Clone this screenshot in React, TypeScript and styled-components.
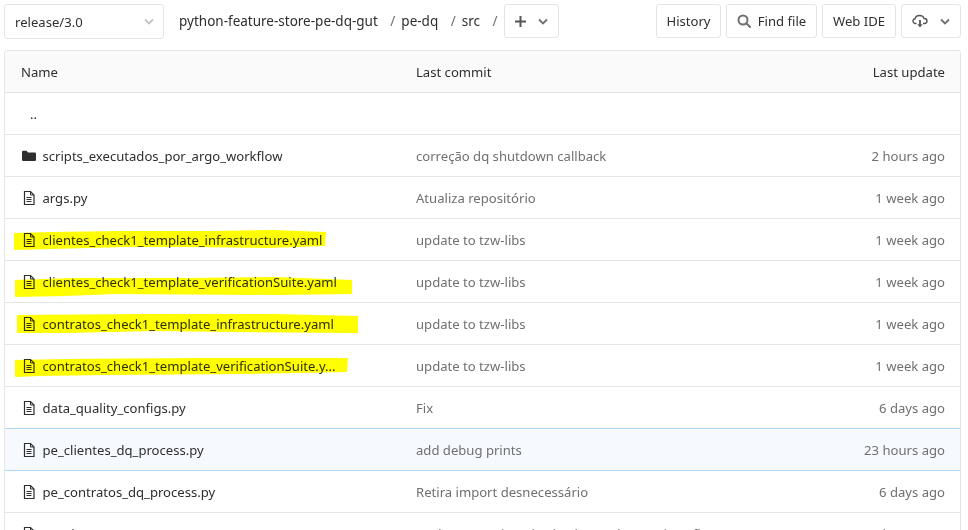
import React from 'react';
import styled, { createGlobalStyle } from 'styled-components';

const GlobalStyle = createGlobalStyle`
  html, body {
    margin: 0;
    height: 530px;
    overflow: hidden;
    background: #fff;
  }
  * { box-sizing: border-box; }
`;

const Page = styled.div`
  padding: 4px 7px 0 4px;
  font-family: 'Noto Sans', 'Open Sans', sans-serif;
  font-size: 13.1px;
  color: #2e2e2e;
`;

const TopBar = styled.div`
  display: flex;
  align-items: flex-start;
  height: 46px;
`;

const BranchSelect = styled.div`
  width: 160px;
  height: 35px;
  padding: 0 9px 0 10px;
  display: flex;
  align-items: center;
  justify-content: space-between;
  border: 1px solid #e5e5e5;
  border-radius: 3px;
  color: #303030;
`;

const Crumbs = styled.div`
  display: flex;
  align-items: center;
  height: 34px;
  margin-left: 15px;
  font-size: 13.5px;
  color: #2e2e2e;
`;

const Sep = styled.span`
  color: #707070;
  margin: 0 6px 0 12.5px;
`;

const Button = styled.div<{ $w: number; $gap?: number }>`
  width: ${(p) => p.$w}px;
  height: 34px;
  display: flex;
  align-items: center;
  justify-content: center;
  gap: ${(p) => p.$gap ?? 7}px;
  border: 1px solid #e5e5e5;
  border-radius: 3px;
  color: #303030;
  background: #fff;
`;

const Actions = styled.div`
  display: flex;
  gap: 5px;
  margin-left: auto;
`;

const Table = styled.div`
  border: 1px solid #e5e5e5;
  border-radius: 3px 3px 0 0;
`;

const columns = `
  display: grid;
  grid-template-columns: 395px 1fr 200px;
  align-items: center;
  height: 42px;
  padding-left: 16px;
  padding-right: 15px;
`;

const HeadRow = styled.div`
  ${columns}
  background: #fafafa;
  border-bottom: 1px solid #e5e5e5;
  border-radius: 3px 3px 0 0;
`;

const Row = styled.div<{ $selected?: boolean }>`
  ${columns}
  position: relative;
  border-bottom: 1px solid ${(p) => (p.$selected ? '#aed7f5' : '#e5e5e5')};
  background: ${(p) => (p.$selected ? '#f6fafe' : '#fff')};
  ${(p) => p.$selected && 'box-shadow: 0 -1px 0 #aed7f5;'}
`;

const NameCell = styled.div`
  display: flex;
  align-items: center;
  gap: 5.5px;
  min-width: 0;
  white-space: nowrap;
`;

const Commit = styled.div`
  color: #707070;
  white-space: nowrap;
`;

const Time = styled.div`
  color: #707070;
  text-align: right;
`;

const HeadTime = styled(Time)`
  color: #2e2e2e;
`;

const Up = styled.span`
  padding-left: 9px;
`;

const Marker = styled.svg`
  position: absolute;
  left: 0;
  top: 0;
  width: 400px;
  height: 41px;
  mix-blend-mode: multiply;
  pointer-events: none;
`;

const Doc = () => (
  <svg width="16" height="16" viewBox="0 0 16 16" fill="none" stroke="#2e2e2e" style={{ flex: 'none' }}>
    <path d="M3.500 1.500h6l3.500 3.500v9.500H3.500z" strokeWidth="1.200" />
    <path d="M9.500 1.500V5H13" strokeWidth="1" />
    <path d="M5.500 7.500h5M5.500 9.500h5M5.500 11.500h5" strokeWidth="1" />
  </svg>
);

const Folder = () => (
  <svg width="16" height="16" viewBox="0 0 16 16" fill="#2e2e2e" style={{ flex: 'none' }}>
    <path d="M1 4a1.200 1.200 0 0 1 1.200-1.200h3.400l1.400 1.600h6.800A1.200 1.200 0 0 1 15 5.600v6.200a1.200 1.200 0 0 1-1.200 1.200H2.200A1.200 1.200 0 0 1 1 11.800z" />
  </svg>
);

const Chevron = ({ color = '#707070' }: { color?: string }) => (
  <svg width="10" height="7" viewBox="0 0 10 7" fill="none" stroke={color} strokeWidth="1.800">
    <path d="M1 1.500l4 4 4-4" />
  </svg>
);

const Plus = () => (
  <svg width="11" height="11" viewBox="0 0 11 11" stroke="#555" strokeWidth="2">
    <path d="M5.500 0v11M0 5.500h11" />
  </svg>
);

const Search = () => (
  <svg width="14" height="14" viewBox="0 0 14 14" fill="none" stroke="#707070" strokeWidth="2">
    <circle cx="6" cy="6" r="4.500" />
    <path d="M9.300 9.300L13 13" strokeLinecap="round" />
  </svg>
);

const CloudDownload = () => (
  <svg width="16" height="16" viewBox="0 0 16 16" fill="none" stroke="#555">
    <path
      d="M4.500 10.500H3.500C2 10.500 1 9.400 1 8.100 1 6.900 1.900 5.900 3.100 5.700 3.400 3.800 4.800 2.500 7.500 2.500c2.600 0 4.100 1.300 4.600 3 1.700 0 2.900 1.200 2.900 2.600 0 1.400-1.100 2.400-2.500 2.400H11"
      strokeWidth="1.400"
    />
    <path d="M8 7v6.500" strokeWidth="1.800" />
    <path d="M5.800 11.500L8 14l2.200-2.500z" fill="#555" strokeWidth="0.500" />
  </svg>
);

type Item = {
  name: string;
  commit: string;
  time: string;
  folder?: boolean;
  selected?: boolean;
  mark?: string;
};

// highlighter strokes, coordinates inside the row
const items: Item[] = [
  { name: 'scripts_executados_por_argo_workflow', commit: 'correção dq shutdown callback', time: '2 hours ago', folder: true },
  { name: 'args.py', commit: 'Atualiza repositório', time: '1 week ago' },
  {
    name: 'clientes_check1_template_infrastructure.yaml',
    commit: 'update to tzw-libs',
    time: '1 week ago',
    mark: '9,14 48,13 115,12 210,12 268,11 321,13 320,27 262,29 180,28 120,28 9,31',
  },
  {
    name: 'clientes_check1_template_verificationSuite.yaml',
    commit: 'update to tzw-libs',
    time: '1 week ago',
    mark: '10,19 70,17 180,17 270,16 347,19 347,33 270,34 110,33 60,35 10,36',
  },
  {
    name: 'contratos_check1_template_infrastructure.yaml',
    commit: 'update to tzw-libs',
    time: '1 week ago',
    mark: '12,12 135,11 270,11 353,13 353,30 230,29 150,28 60,30 12,30',
  },
  {
    name: 'contratos_check1_template_verificationSuite.y...',
    commit: 'update to tzw-libs',
    time: '1 week ago',
    mark: '10,15 60,14 190,13 343,13 342,27 240,29 100,30 35,31 10,32',
  },
  { name: 'data_quality_configs.py', commit: 'Fix', time: '6 days ago' },
  { name: 'pe_clientes_dq_process.py', commit: 'add debug prints', time: '23 hours ago', selected: true },
  { name: 'pe_contratos_dq_process.py', commit: 'Retira import desnecessário', time: '6 days ago' },
  { name: 'requirements.txt', commit: 'Update metadata do check template and configs', time: '19 hours ago' },
];

export default function App() {
  return (
    <Page>
      <GlobalStyle />
      <TopBar>
        <BranchSelect>
          release/3.0
          <Chevron color="#c4c4c4" />
        </BranchSelect>
        <Crumbs>
          python-feature-store-pe-dq-gut
          <Sep>/</Sep>
          pe-dq
          <Sep>/</Sep>
          src
          <Sep>/</Sep>
        </Crumbs>
        <Button $w={55} $gap={12}>
          <Plus />
          <Chevron />
        </Button>
        <Actions>
          <Button $w={65}>History</Button>
          <Button $w={91}>
            <Search />
            Find file
          </Button>
          <Button $w={74}>Web IDE</Button>
          <Button $w={60} $gap={12}>
            <CloudDownload />
            <Chevron />
          </Button>
        </Actions>
      </TopBar>
      <Table>
        <HeadRow>
          <div>Name</div>
          <div>Last commit</div>
          <HeadTime>Last update</HeadTime>
        </HeadRow>
        <Row>
          <Up>..</Up>
        </Row>
        {items.map((item) => (
          <Row key={item.name} $selected={item.selected}>
            <NameCell>
              {item.folder ? <Folder /> : <Doc />}
              {item.name}
            </NameCell>
            <Commit>{item.commit}</Commit>
            <Time>{item.time}</Time>
            {item.mark && (
              <Marker viewBox="0 0 400 41">
                <polygon points={item.mark} fill="#ffff00" />
              </Marker>
            )}
          </Row>
        ))}
      </Table>
    </Page>
  );
}
